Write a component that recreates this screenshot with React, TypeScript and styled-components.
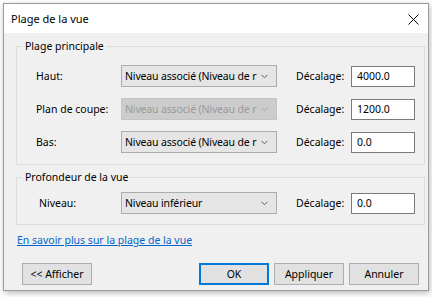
import styled, { createGlobalStyle } from 'styled-components';

const GlobalStyle = createGlobalStyle`
  html, body {
    margin: 0;
    background: #ffffff;
  }

  body {
    font-family: 'Segoe UI', 'Noto Sans', sans-serif;
    font-size: 10.5px;
    color: #000000;
  }
`;

const Page = styled.div`
  width: 432px;
  height: 297px;
  padding: 3px 0 0 3px;
  box-sizing: border-box;
`;

const Window = styled.div`
  width: 426px;
  height: 288px;
  box-sizing: border-box;
  border: 1px solid #9b9b9b;
  display: flex;
  flex-direction: column;
  box-shadow: 1px 2px 6px rgba(0, 0, 0, 0.28);
`;

const TitleBar = styled.div`
  height: 29px;
  flex: none;
  background: #ffffff;
  display: flex;
  align-items: center;
  justify-content: space-between;
  padding: 0 9px 0 7px;
`;

const Title = styled.span`
  font-size: 11px;
`;

const CloseButton = styled.span`
  display: flex;
  width: 11px;
  height: 11px;
  margin-top: 1px;
`;

const Body = styled.div`
  flex: 1;
  background: #f0f0f0;
  padding: 5px 3px 0 12px;
  display: flex;
  flex-direction: column;
`;

const GroupBox = styled.fieldset<{ $top: number; $pt: number; $pb: number }>`
  margin: ${({ $top }) => $top}px 0 0 0;
  padding: ${({ $pt }) => $pt}px 0 ${({ $pb }) => $pb}px 0;
  border: 1px solid #dcdcdc;
  min-width: 0;
  display: flex;
  flex-direction: column;
  gap: 11px;
`;

const Legend = styled.legend`
  margin-left: 6px;
  padding: 0 2px;
  line-height: 16px;
`;

const Row = styled.div`
  display: flex;
  align-items: center;
  height: 22px;
  padding-left: 19px;
`;

const FieldLabel = styled.span<{ $indent?: number }>`
  width: 85px;
  padding-left: ${({ $indent }) => $indent ?? 0}px;
  box-sizing: border-box;
  white-space: nowrap;
`;

const Combo = styled.div<{ $disabled?: boolean }>`
  width: 156px;
  height: 22px;
  box-sizing: border-box;
  border: 1px solid ${({ $disabled }) => ($disabled ? '#c4c4c4' : '#acacac')};
  background: ${({ $disabled }) => ($disabled ? '#cccccc' : '#e5e5e5')};
  color: ${({ $disabled }) => ($disabled ? '#9a9a9a' : '#000000')};
  display: flex;
  align-items: center;
  padding: 0 8px 0 3px;
`;

const ComboText = styled.span`
  flex: 1;
  overflow: hidden;
  white-space: nowrap;
  letter-spacing: -0.15px;
`;

const Chevron = styled.svg`
  flex: none;
  width: 7px;
  height: 5px;
`;

const OffsetLabel = styled.span`
  width: 55px;
  margin-left: 19px;
  white-space: nowrap;
`;

const Input = styled.div`
  width: 64px;
  height: 21px;
  box-sizing: border-box;
  border: 1px solid #7a7a7a;
  background: #ffffff;
  display: flex;
  align-items: center;
  padding-left: 5px;
`;

const Link = styled.a`
  margin: 7px 0 0 1px;
  line-height: 16px;
  color: #0066cc;
  text-decoration: underline;
  align-self: flex-start;
`;

const Footer = styled.div`
  margin: 15px 6px 0 6px;
  display: flex;
  align-items: center;
  gap: 5px;
`;

const Spacer = styled.div`
  flex: 1;
`;

const Button = styled.button<{ $default?: boolean }>`
  width: 70px;
  height: 22px;
  box-sizing: border-box;
  margin: 0;
  padding: 0;
  font: inherit;
  color: #000000;
  background: #e1e1e1;
  border: ${({ $default }) => ($default ? '2px solid #0078d7' : '1px solid #adadad')};
`;

type LevelRow = {
  label: string;
  level: string;
  offset: string;
  disabled?: boolean;
  indent?: number;
};

const mainRows: LevelRow[] = [
  { label: 'Haut:', level: 'Niveau associé (Niveau de r', offset: '4000.0' },
  { label: 'Plan de coupe:', level: 'Niveau associé (Niveau de r', offset: '1200.0', disabled: true },
  { label: 'Bas:', level: 'Niveau associé (Niveau de r', offset: '0.0' },
];

function LevelField({ label, level, offset, disabled, indent }: LevelRow) {
  return (
    <Row>
      <FieldLabel $indent={indent}>{label}</FieldLabel>
      <Combo $disabled={disabled}>
        <ComboText>{level}</ComboText>
        <Chevron viewBox='0 0 7 5'>
          <polyline
            points='0.5,0.8 3.5,3.8 6.5,0.8'
            fill='none'
            stroke={disabled ? '#a6a6a6' : '#606060'}
            strokeWidth='1'
          />
        </Chevron>
      </Combo>
      <OffsetLabel>Décalage:</OffsetLabel>
      <Input>{offset}</Input>
    </Row>
  );
}

function App() {
  return (
    <Page>
      <GlobalStyle />
      <Window>
        <TitleBar>
          <Title>Plage de la vue</Title>
          <CloseButton>
            <svg width='11' height='11' viewBox='0 0 11 11'>
              <path d='M0.5 0.5 L10.5 10.5 M10.5 0.5 L0.5 10.5' stroke='#000' strokeWidth='1' />
            </svg>
          </CloseButton>
        </TitleBar>
        <Body>
          <GroupBox $top={0} $pt={11} $pb={11}>
            <Legend>Plage principale</Legend>
            {mainRows.map((row) => (
              <LevelField key={row.label} {...row} />
            ))}
          </GroupBox>
          <GroupBox $top={4} $pt={7} $pb={10}>
            <Legend>Profondeur de la vue</Legend>
            <LevelField label='Niveau:' level='Niveau inférieur' offset='0.0' indent={3} />
          </GroupBox>
          <Link href='#'>En savoir plus sur la plage de la vue</Link>
          <Footer>
            <Button>&lt;&lt; Afficher</Button>
            <Spacer />
            <Button $default>OK</Button>
            <Button>Appliquer</Button>
            <Button>Annuler</Button>
          </Footer>
        </Body>
      </Window>
    </Page>
  );
}

export default App;
